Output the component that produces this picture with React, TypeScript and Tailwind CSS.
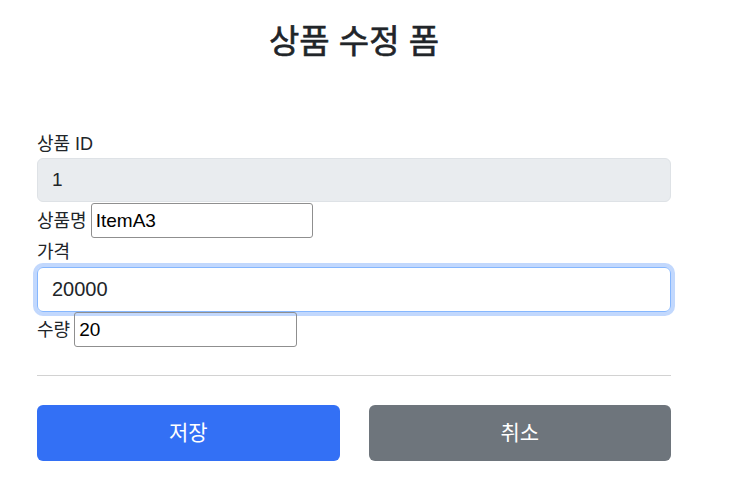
import { useState } from 'react';

const font = { fontFamily: '"Liberation Sans", "Noto Sans CJK KR", sans-serif' };

export default function App() {
  const [name, setName] = useState('ItemA3');
  const [price, setPrice] = useState('20000');
  const [qty, setQty] = useState('20');

  return (
    <div className="min-h-[495px] bg-white text-[#212529]" style={font}>
      <div className="ml-[37px] w-[634px]">
        <h2 className="pt-[23px] text-center text-[33px] leading-[38px] font-normal [-webkit-text-stroke:0.6px_#212529]">
          상품 수정 폼
        </h2>

        <form className="mt-[71px]" onSubmit={(e) => e.preventDefault()}>
          <label className="block h-6 text-[18px] leading-6">상품 ID</label>
          <input
            className="mt-[2px] block h-[44px] w-full rounded-md border border-[#dee2e6] bg-[#e9ecef] px-[14px] text-[19px] outline-none"
            value="1"
            readOnly
          />

          <div className="mt-[1px] flex items-center gap-1">
            <label className="text-[18px] leading-6">상품명</label>
            <input
              className="h-[35px] w-[222px] rounded-[3px] border border-[#8f8f8f] px-[4px] text-[19px] text-black outline-none"
              value={name}
              onChange={(e) => setName(e.target.value)}
            />
          </div>

          <label className="mt-[2px] block h-6 text-[18px] leading-6">가격</label>
          <input
            className="mt-[3px] block h-[45px] w-full rounded-md border border-[#86b7fe] px-[14px] text-[20px] outline-none ring-4 ring-[#c2d8fd]"
            value={price}
            onChange={(e) => setPrice(e.target.value)}
          />

          <div className="flex items-center gap-1">
            <label className="text-[18px] leading-6">수량</label>
            <input
              className="h-[35px] w-[223px] rounded-[3px] border border-[#8f8f8f] px-[4px] text-[19px] text-black outline-none"
              value={qty}
              onChange={(e) => setQty(e.target.value)}
            />
          </div>

          <hr className="mt-[28px] border-t border-[#d2d2d2]" />

          <div className="mt-[29px] flex gap-[29px]">
            <button
              type="submit"
              className="h-[56px] flex-1 rounded-md bg-[#3370f5] text-[21px] text-white"
            >
              저장
            </button>
            <button
              type="button"
              className="h-[56px] flex-1 rounded-md bg-[#6e757c] text-[21px] text-white"
            >
              취소
            </button>
          </div>
        </form>
      </div>
    </div>
  );
}
